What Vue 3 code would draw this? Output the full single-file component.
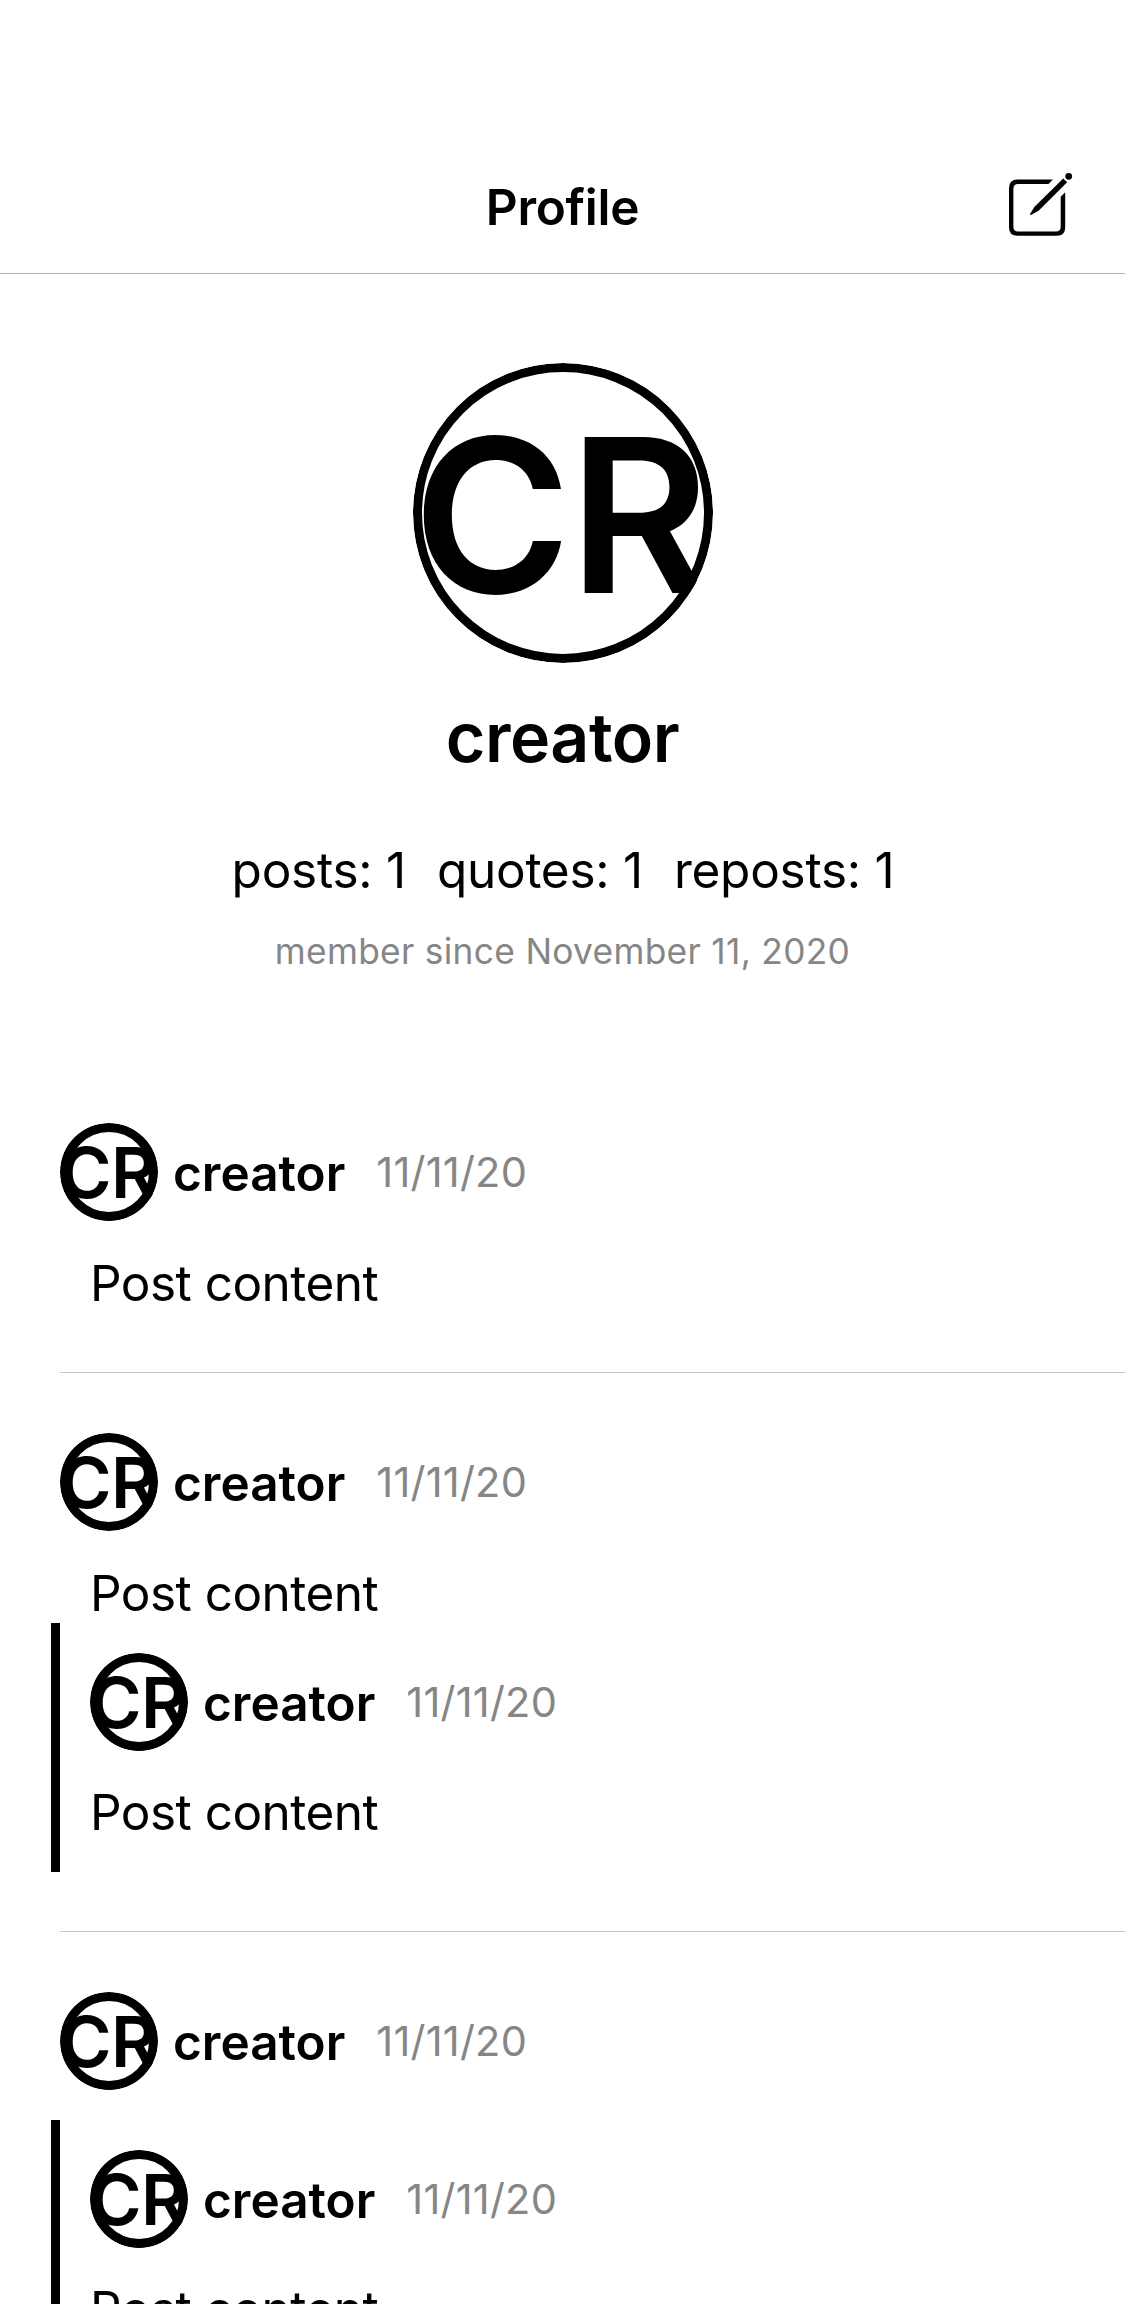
<script setup>
import { h } from 'vue'

const author = { name: 'creator', initials: ['C', 'R'] }
const stats = [
  { label: 'posts', count: 1 },
  { label: 'quotes', count: 1 },
  { label: 'reposts', count: 1 },
]
const date = '11/11/20'
const posts = [
  { id: 1, text: 'Post content' },
  { id: 2, text: 'Post content', quoted: { text: 'Post content' } },
  { id: 3, quoted: { text: 'Post content' } },
]

// Round avatar: initials drawn on a 300-unit canvas, ringed by a border
const Avatar = (props) =>
  h('svg', { viewBox: '0 0 300 300', width: props.size, height: props.size, style: { borderRadius: '50%', display: 'block', flex: 'none' } }, [
    h('g', { 'font-family': 'Inter, sans-serif', 'font-weight': 600, 'font-size': 214.5, style: props.soft ? { filter: 'blur(0.8px)' } : null }, [
      h('text', { x: 0, y: 229.7 }, author.initials[0]),
      h('text', { x: 156, y: 229.7 }, author.initials[1]),
    ]),
    h('circle', {
      cx: 150, cy: 150,
      r: 150 - (4.5 * 300) / props.size,
      fill: 'none', stroke: '#000',
      'stroke-width': (9 * 300) / props.size,
    }),
  ])
Avatar.props = ['size', 'soft']
</script>

<template>
  <div class="screen">
    <header class="navbar">
      <span></span>
      <h1 class="title">Profile</h1>
      <button class="compose" aria-label="New post">
        <svg viewBox="0 0 80 80" width="80" height="80">
          <path d="M52.9 14.5H17.5Q9 14.5 9 23V62.3Q9 70.8 17.5 70.8H56.7Q65.2 70.8 65.2 62.3V27.2L60.7 31.7V61.7Q60.7 66.5 55.9 66.5H18.2Q13.4 66.5 13.4 61.7V23.7Q13.4 18.9 18.2 18.9H48.5Z" />
          <path d="M63.2 13.4L67.1 17.3L38.6 45.7L31 49.9Q29.6 50.4 30.1 49L34.3 41.9Z" />
          <circle cx="68.7" cy="11.3" r="3.4" />
        </svg>
      </button>
    </header>

    <section class="profile">
      <Avatar :size="300" soft />
      <h2 class="profile-name">{{ author.name }}</h2>
      <div class="stats">
        <span v-for="s in stats" :key="s.label">{{ s.label }}: {{ s.count }}</span>
      </div>
      <p class="since">member since November 11, 2020</p>
    </section>

    <main class="feed">
      <article v-for="post in posts" :key="post.id" class="post">
        <div class="byline">
          <Avatar :size="98" />
          <span class="name">{{ author.name }}</span>
          <time class="date">{{ date }}</time>
        </div>
        <p v-if="post.text" class="body">{{ post.text }}</p>
        <div v-if="post.quoted" class="quote">
          <div class="byline">
            <Avatar :size="98" />
            <span class="name">{{ author.name }}</span>
            <time class="date">{{ date }}</time>
          </div>
          <p class="body">{{ post.quoted.text }}</p>
        </div>
      </article>
    </main>
  </div>
</template>

<style>
body {
  margin: 0;
  background: #fff;
}
</style>

<style scoped>
.screen {
  box-sizing: border-box;
  height: 2304px;
  padding-top: 141px;
  overflow: hidden;
  background: #fff;
  color: #000;
  font-family: Inter, "Liberation Sans", sans-serif;
}

h1, h2, p {
  margin: 0;
}

.navbar {
  display: grid;
  grid-template-columns: 1fr auto 1fr;
  height: 132px;
  align-items: center;
  border-bottom: 1px solid #b3b3b3;
}

.title {
  font-size: 49.5px;
  font-weight: 600;
  line-height: 62px;
  letter-spacing: -0.25px;
}

.compose {
  justify-self: end;
  width: 80px;
  height: 80px;
  margin: 0 45px 4px 0;
  padding: 0;
  border: 0;
  background: none;
}

.compose svg {
  display: block;
}

.profile {
  display: flex;
  flex-direction: column;
  align-items: center;
  padding-top: 89px;
  height: 700px;
}

.profile-name {
  margin-top: 29px;
  font-size: 68px;
  font-weight: 600;
  line-height: 90px;
  letter-spacing: -0.5px;
}

.stats {
  display: flex;
  gap: 31px;
  margin: 58px 0 29px 1px;
  font-size: 49.5px;
  line-height: 61px;
  letter-spacing: -0.25px;
}

.since {
  font-size: 35.3px;
  line-height: 43px;
  letter-spacing: 0.31px;
  color: #868686;
}

.post {
  margin-left: 60px;
  padding: 60px 0;
  border-bottom: 1px solid #c6c6c6;
}

.byline {
  display: flex;
  height: 98px;
  margin-bottom: 30px;
}

.name {
  margin: 1px 31px 0 15px;
  font-size: 49.5px;
  font-weight: 600;
  line-height: 98px;
}

.date {
  font-size: 41.5px;
  line-height: 98px;
  letter-spacing: 0.22px;
  color: #868686;
}

.body {
  box-sizing: border-box;
  height: 61px;
  padding: 2px 0 0 30px;
  font-size: 49.5px;
  line-height: 61px;
  letter-spacing: -0.52px;
}

.quote {
  margin-left: -9px;
  padding: 30px 0 30px 30px;
  border-left: 9px solid #000;
}

.quote .body {
  padding: 1px 0 0;
}

.body + .quote {
  margin-top: 1px;
  margin-bottom: -1px;
}
</style>
